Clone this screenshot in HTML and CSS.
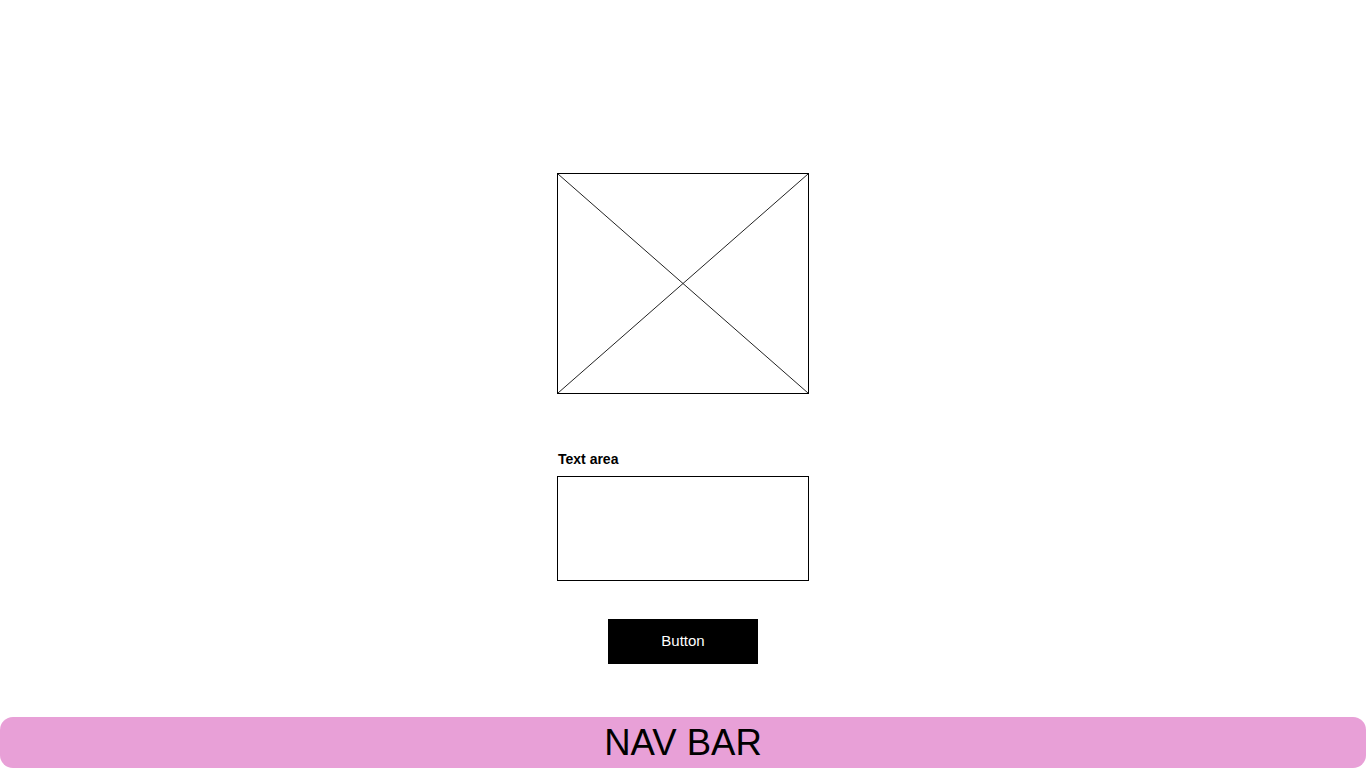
FILE: index.html
```html
<!DOCTYPE html>
<html>

<head>
  <meta charset="utf-8" />
  <title>Wireframe</title>
  <link rel="stylesheet" href="styles.css">
</head>

<body>
  <div class="page">
    <div class="content">
      <div class="placeholder">
        <svg class="cross" viewBox="0 0 250 219" preserveAspectRatio="none">
          <line x1="0" y1="0" x2="250" y2="219" />
          <line x1="250" y1="0" x2="0" y2="219" />
        </svg>
      </div>

      <div class="field">
        <label class="field-label">Text area</label>
        <div class="text-area"></div>
      </div>

      <div class="button">Button</div>
    </div>

    <div class="nav-bar">NAV BAR</div>
  </div>
</body>

</html>
```

FILE: styles.css
```css
* {
  margin: 0;
  padding: 0;
  box-sizing: border-box;
  font-family: "Liberation Sans", "Arial", sans-serif;
}

html,
body {
  width: 100%;
  height: 100%;
  overflow: hidden;
  background-color: #fff;
}

.page {
  display: flex;
  flex-direction: column;
  height: 100%;
}

.content {
  flex: 1 1 auto;
  display: flex;
  flex-direction: column;
  align-items: center;
  padding-top: 173px;
}

.placeholder {
  width: 252px;
  height: 221px;
  border: 1px solid #000;
}

.cross {
  display: block;
  width: 100%;
  height: 100%;
}

.cross line {
  stroke: #222;
  stroke-width: 1;
  vector-effect: non-scaling-stroke;
}

.field {
  display: flex;
  flex-direction: column;
  margin-top: 57px;
}

.field-label {
  font-size: 14px;
  font-weight: bold;
  line-height: 16px;
  padding-left: 1px;
  margin-bottom: 9px;
}

.text-area {
  width: 252px;
  height: 105px;
  border: 1px solid #000;
}

.button {
  width: 150px;
  height: 45px;
  margin-top: 38px;
  padding-bottom: 2px;
  background-color: #000;
  color: #fff;
  font-size: 15px;
  display: flex;
  align-items: center;
  justify-content: center;
}

.nav-bar {
  flex: 0 0 auto;
  height: 51px;
  margin-bottom: 1px;
  background-color: #e8a0d7;
  border-radius: 13px;
  font-size: 36.5px;
  line-height: 51px;
  text-align: center;
  color: #000;
}
```
